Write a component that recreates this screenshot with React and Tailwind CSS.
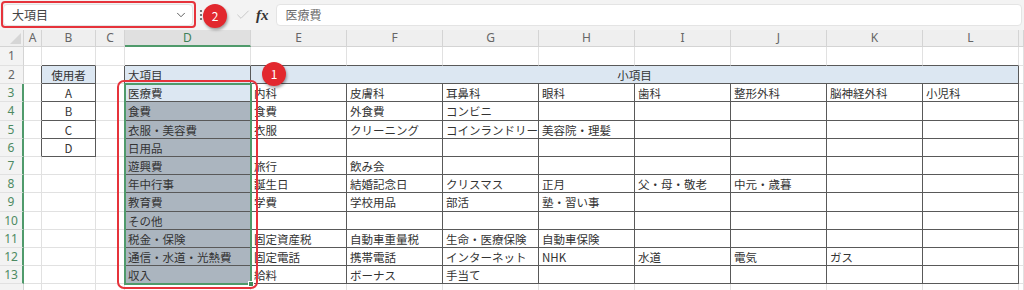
import { ChevronDown, Check } from 'lucide-react'

const GRID = 'grid grid-cols-[24px_18px_54px_29px_126px_96px_96px_96px_96px_96px_96px_96px_96px_1fr]'
const COLS = ['A', 'B', 'C', 'D', 'E', 'F', 'G', 'H', 'I', 'J', 'K', 'L', 'M']

const ROWS = [
  { n: 1, h: 'h-[19px]' },
  { n: 2, h: 'h-[18px]' },
  { n: 3, h: 'h-[18px]' },
  { n: 4, h: 'h-[19px]' },
  { n: 5, h: 'h-[18px]' },
  { n: 6, h: 'h-[18px]' },
  { n: 7, h: 'h-[18px]' },
  { n: 8, h: 'h-[18px]' },
  { n: 9, h: 'h-[19px]' },
  { n: 10, h: 'h-[18px]' },
  { n: 11, h: 'h-[18px]' },
  { n: 12, h: 'h-[18px]' },
  { n: 13, h: 'h-[18px]' },
  { n: 14, h: 'h-[18px]' },
]

const DATA = {
  2: { B: '使用者', D: '大項目', E: '小項目' },
  3: { B: 'A', D: '医療費', E: '内科', F: '皮膚科', G: '耳鼻科', H: '眼科', I: '歯科', J: '整形外科', K: '脳神経外科', L: '小児科' },
  4: { B: 'B', D: '食費', E: '食費', F: '外食費', G: 'コンビニ' },
  5: { B: 'C', D: '衣服・美容費', E: '衣服', F: 'クリーニング', G: 'コインランドリー', H: '美容院・理髪' },
  6: { B: 'D', D: '日用品' },
  7: { D: '遊興費', E: '旅行', F: '飲み会' },
  8: { D: '年中行事', E: '誕生日', F: '結婚記念日', G: 'クリスマス', H: '正月', I: '父・母・敬老', J: '中元・歳暮' },
  9: { D: '教育費', E: '学費', F: '学校用品', G: '部活', H: '塾・習い事' },
  10: { D: 'その他' },
  11: { D: '税金・保険', E: '固定資産税', F: '自動車重量税', G: '生命・医療保険', H: '自動車保険' },
  12: { D: '通信・水道・光熱費', E: '固定電話', F: '携帯電話', G: 'インターネット', H: 'NHK', I: '水道', J: '電気', K: 'ガス' },
  13: { D: '収入', E: '給料', F: 'ボーナス', G: '手当て' },
}

const ci = (c) => COLS.indexOf(c)

// cells that carry the dark table borders
function inTable(r, c) {
  if (c === 'B' && r >= 2 && r <= 6) return true
  if (ci(c) >= ci('D') && ci(c) <= ci('L') && r >= 2 && r <= 13) return true
  return false
}

function fillFor(r, c) {
  if (r === 2 && (c === 'B' || c === 'D' || c === 'E')) return 'bg-[#dce7f2]'
  if (c === 'D' && r === 3) return 'bg-[#dce7f2]'
  if (c === 'D' && r >= 4 && r <= 13) return 'bg-[#abb5bf]'
  return 'bg-white'
}

function Cell({ r, c }) {
  const merged = r === 2 && c === 'E'
  const rightNeighbor = merged ? 'M' : COLS[ci(c) + 1]
  const rightDark = inTable(r, merged ? 'L' : c) || (rightNeighbor && inTable(r, rightNeighbor))
  const bottomDark = inTable(r, c) || inTable(r + 1, c)
  const text = DATA[r]?.[c]
  const centered = c === 'B' || merged

  return (
    <div
      className={`flex min-h-0 min-w-0 items-center overflow-hidden whitespace-nowrap border-r border-b text-[11.5px] leading-[14px] text-[#333] ${
        rightDark ? 'border-r-[#595959]' : 'border-r-[#e1e1e1]'
      } ${bottomDark ? 'border-b-[#595959]' : 'border-b-[#e1e1e1]'} ${fillFor(r, c)} ${
        centered ? 'justify-center' : 'pl-[3px]'
      } ${merged ? 'col-span-8' : ''}`}
    >
      {text}
    </div>
  )
}

function RowHeader({ n }) {
  const sel = n >= 3 && n <= 13
  return (
    <div
      className={`flex min-h-0 items-center justify-center border-b border-b-[#e1e1e1] bg-[#f3f3f3] font-['Noto_Sans',sans-serif] text-[12px] leading-[14px] ${
        sel ? 'border-r-2 border-r-[#4f9a6b] text-[#4d8a62]' : 'border-r border-r-[#d4d4d4] text-[#666]'
      }`}
    >
      {n < 14 ? n : ''}
    </div>
  )
}

function ColumnHeaders() {
  return (
    <div className={`${GRID} h-[17px] bg-[#efefef] font-['Noto_Sans',sans-serif] text-[12px] leading-[14px]`}>
      <div className="relative border-r border-b border-[#d4d4d4]">
        <svg className="absolute right-[2px] bottom-[2px]" width="11" height="11" viewBox="0 0 11 11">
          <path d="M11 0 L11 11 L0 11 Z" fill="#d6d6d6" />
        </svg>
      </div>
      {COLS.map((c) =>
        c === 'D' ? (
          <div
            key={c}
            className="flex min-h-0 items-center justify-center border-r border-r-[#d4d4d4] border-b-2 border-b-[#4f9a6b] bg-[#e0e0e0] text-[#3f8058]"
          >
            {c}
          </div>
        ) : (
          <div
            key={c}
            className="flex min-h-0 items-center justify-center border-r border-b border-[#d4d4d4] text-[#666]"
          >
            {c === 'M' ? '' : c}
          </div>
        )
      )}
    </div>
  )
}

function FormulaBar() {
  return (
    <div className="flex h-[30px] items-center bg-[#f3f3f3]">
      <div className="ml-[3px] flex h-[22px] w-[190px] items-center justify-between rounded-[4px] border border-[#e4e4e4] bg-white pr-[4px] pl-[8px]">
        <span className="text-[12px] text-[#444]">大項目</span>
        <ChevronDown size={14} strokeWidth={1.6} className="text-[#555]" />
      </div>
      <svg className="ml-[6px]" width="4" height="12" viewBox="0 0 4 12">
        <circle cx="2" cy="2" r="1.1" fill="#555" />
        <circle cx="2" cy="6" r="1.1" fill="#555" />
        <circle cx="2" cy="10" r="1.1" fill="#555" />
      </svg>
      <Check size={16} strokeWidth={1.3} className="ml-[32px] text-[#c2c2c2]" />
      <span className="ml-[5px] font-['Liberation_Serif',serif] text-[15px] font-bold italic text-[#333]">fx</span>
      <div className="mr-[2px] ml-[7px] flex h-[22px] flex-1 items-center rounded-[4px] border border-[#e4e4e4] bg-white pl-[9px]">
        <span className="text-[12px] text-[#6a6a6a]">医療費</span>
      </div>
    </div>
  )
}

export default function App() {
  return (
    <div className="relative h-[290px] w-[1024px] overflow-hidden bg-white font-['Noto_Sans_CJK_JP','Noto_Sans',sans-serif]">
      <FormulaBar />
      <ColumnHeaders />
      {ROWS.map((row) => (
        <div key={row.n} className={`${GRID} ${row.h}`}>
          <RowHeader n={row.n} />
          {COLS.map((c) =>
            row.n === 2 && ci(c) > ci('E') && ci(c) <= ci('L') ? null : <Cell key={c} r={row.n} c={c} />
          )}
        </div>
      ))}

      {/* selection D3:D13 */}
      <div className="absolute top-[83px] left-[124px] h-[202px] w-[128px] border-2 border-[#4f9a6b]" />
      <div className="absolute top-[281px] left-[248px] h-[6px] w-[6px] border border-white bg-[#3f8a5a]" />

      {/* annotations */}
      <div className="absolute top-[80px] left-[117px] h-[209px] w-[141px] rounded-[7px] border-2 border-[#e6333b]" />
      <div className="absolute top-[1px] left-[1px] h-[27px] w-[195px] rounded-[4px] border-2 border-[#e6333b]" />
      <div className="absolute top-[62px] left-[262px] flex h-[24px] w-[24px] items-center justify-center rounded-full bg-[#e2282e] text-[12px] text-white shadow-[1px_2px_3px_rgba(0,0,0,0.35)]">
        1
      </div>
      <div className="absolute top-[4px] left-[203px] flex h-[24px] w-[24px] items-center justify-center rounded-full bg-[#e2282e] text-[12px] text-white shadow-[1px_2px_3px_rgba(0,0,0,0.35)]">
        2
      </div>
    </div>
  )
}
